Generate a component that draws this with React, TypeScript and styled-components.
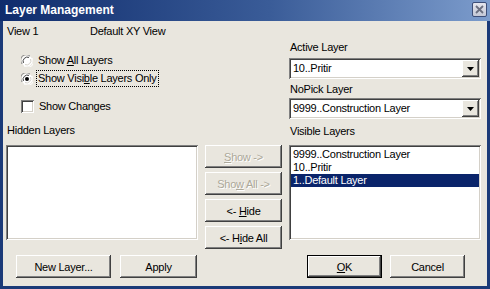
import React, { useState } from 'react';
import styled, { createGlobalStyle, css } from 'styled-components';

const GlobalStyle = createGlobalStyle`
  html, body {
    margin: 0;
    padding: 0;
    background: #ffffff;
  }
  #root {
    width: 490px;
    height: 289px;
  }
  * {
    box-sizing: border-box;
  }
`;

const FACE = '#e9e6de';

const Window = styled.div`
  width: 490px;
  height: 289px;
  display: flex;
  flex-direction: column;
  background: #1b3a78;
  font-family: 'Liberation Sans', Arial, sans-serif;
  font-size: 11px;
  letter-spacing: -0.25px;
  color: #000;
`;

const TitleBar = styled.div`
  height: 21px;
  display: flex;
  align-items: center;
  justify-content: space-between;
  padding: 0 3px 0 5px;
  background: linear-gradient(to right, #0f2c6c 0%, #3a5c98 55%, #7c9ccc 100%);
`;

const Title = styled.span`
  color: #fff;
  font-weight: bold;
  font-size: 12px;
  letter-spacing: 0;
  margin-top: -1px;
`;

const CloseButton = styled.div`
  width: 15px;
  height: 15px;
  margin-top: -2px;
  display: flex;
  align-items: center;
  justify-content: center;
  background: linear-gradient(#e4e6ee, #c4c8d6);
  border: 1px solid #3c4e78;
  border-radius: 2px;
`;

const Body = styled.div`
  flex: 1;
  margin: 0 3px 3px;
  background: ${FACE};
  display: flex;
  flex-direction: column;
  padding-left: 3px;
`;

const Main = styled.div`
  height: 229px;
  display: flex;
  gap: 7px;
`;

const LeftColumn = styled.div`
  width: 276px;
  display: flex;
  flex-direction: column;
`;

const RightColumn = styled.div`
  width: 192px;
  display: flex;
  flex-direction: column;
`;

const ViewRow = styled.div`
  margin-top: 4px;
  height: 13px;
  line-height: 13px;
  display: flex;
  padding-left: 1px;
`;

const ViewName = styled.span`
  width: 83px;
`;

const Label = styled.div<{ $top: number }>`
  margin-top: ${p => p.$top}px;
  height: 13px;
  line-height: 13px;
  padding-left: 1px;
  white-space: nowrap;
`;

const OptionRow = styled.div<{ $top: number; $h: number }>`
  margin-top: ${p => p.$top}px;
  height: ${p => p.$h}px;
  display: flex;
  align-items: center;
  padding-left: 15px;
  gap: 5px;
  white-space: nowrap;
`;

const OptionText = styled.span<{ $focus?: boolean }>`
  line-height: 13px;
  padding: 1px 1px;
  border: 1px dotted transparent;
  margin-left: -2px;
  ${p =>
    p.$focus &&
    css`
      border-color: #000;
    `}
`;

const CheckBox = styled.div`
  width: 13px;
  height: 13px;
  background: #fff;
  box-shadow: inset 1px 1px #808080, inset -1px -1px #fff, inset 2px 2px #404040,
    inset -2px -2px #d4d0c8;
`;

const sunken = css`
  background: #fff;
  box-shadow: inset 1px 1px #808080, inset -1px -1px #fff, inset 2px 2px #404040,
    inset -2px -2px #d4d0c8;
`;

const ListRow = styled.div`
  margin-top: 8px;
  display: flex;
  gap: 7px;
`;

const ListBox = styled.div<{ $top?: number }>`
  ${sunken};
  margin-top: ${p => p.$top ?? 0}px;
  width: 192px;
  height: 95px;
  padding: 3px 2px 2px;
  display: flex;
  flex-direction: column;
`;

const ListItem = styled.div<{ $selected?: boolean }>`
  height: 13px;
  line-height: 13px;
  padding-left: 2px;
  white-space: nowrap;
  ${p =>
    p.$selected &&
    css`
      background: #0a246a;
      color: #fff;
    `}
`;

const ButtonColumn = styled.div`
  width: 77px;
  display: flex;
  flex-direction: column;
  gap: 4px;
`;

const Button = styled.div<{ $w?: number; $disabled?: boolean; $default?: boolean }>`
  width: ${p => (p.$w ? `${p.$w}px` : '100%')};
  height: 23px;
  display: flex;
  align-items: center;
  justify-content: center;
  background: ${FACE};
  white-space: nowrap;
  box-shadow: inset -1px -1px #404040, inset 1px 1px #fff, inset -2px -2px #808080;
  ${p =>
    p.$disabled &&
    css`
      color: #aca899;
      text-shadow: 1px 1px #fff;
    `}
  ${p =>
    p.$default &&
    css`
      box-shadow: inset 0 0 0 1px #000, inset -2px -2px #404040, inset 2px 2px #fff,
        inset -3px -3px #808080;
    `}
`;

const Combo = styled.div<{ $top: number }>`
  ${sunken};
  margin-top: ${p => p.$top}px;
  height: 21px;
  display: flex;
  align-items: center;
  justify-content: space-between;
  padding: 2px 2px 2px 4px;
`;

const ComboText = styled.span`
  line-height: 13px;
`;

const ComboArrow = styled.div`
  width: 17px;
  height: 17px;
  display: flex;
  align-items: center;
  justify-content: center;
  background: ${FACE};
  box-shadow: inset -1px -1px #404040, inset 1px 1px #fff, inset -2px -2px #808080;
`;

const Footer = styled.div`
  margin-top: 5px;
  display: flex;
  padding: 0 22px 0 10px;
  gap: 9px;
`;

const Spacer = styled.div`
  flex: 1;
`;

const FooterGroup = styled.div`
  display: flex;
  gap: 8px;
`;

const Radio = ({ checked }: { checked?: boolean }) => (
  <svg width="12" height="12" viewBox="0 0 12 12">
    <circle cx="6" cy="6" r="5.5" fill="#fff" />
    <path d="M1.2 9 A5.5 5.5 0 0 1 9 1.2" stroke="#808080" strokeWidth="1" fill="none" />
    <path d="M2.4 8 A4.3 4.3 0 0 1 8 2.4" stroke="#404040" strokeWidth="1" fill="none" />
    <path d="M10.8 3 A5.5 5.5 0 0 1 3 10.8" stroke="#fff" strokeWidth="1" fill="none" />
    <path d="M9.6 4 A4.3 4.3 0 0 1 4 9.6" stroke="#d4d0c8" strokeWidth="1" fill="none" />
    {checked && <circle cx="6" cy="6" r="2" fill="#000" />}
  </svg>
);

const Arrow = () => (
  <svg width="7" height="4" viewBox="0 0 7 4">
    <path d="M0 0 H7 L3.5 4 Z" fill="#000" />
  </svg>
);

export default function App() {
  const [showVisibleOnly] = useState(true);
  const visible = ['9999..Construction Layer', '10..Pritir', '1..Default Layer'];

  return (
    <>
      <GlobalStyle />
      <Window>
        <TitleBar>
          <Title>Layer Management</Title>
          <CloseButton>
            <svg width="9" height="9" viewBox="0 0 9 9">
              <path d="M1 1 L8 8 M8 1 L1 8" stroke="#6a6f80" strokeWidth="1.8" />
            </svg>
          </CloseButton>
        </TitleBar>
        <Body>
          <Main>
            <LeftColumn>
              <ViewRow>
                <ViewName>View 1</ViewName>
                <span>Default XY View</span>
              </ViewRow>
              <OptionRow $top={16} $h={13}>
                <Radio checked={!showVisibleOnly} />
                <OptionText>
                  Show <u>A</u>ll Layers
                </OptionText>
              </OptionRow>
              <OptionRow $top={3} $h={17}>
                <Radio checked={showVisibleOnly} />
                <OptionText $focus>
                  Show Visi<u>b</u>le Layers Only
                </OptionText>
              </OptionRow>
              <OptionRow $top={12} $h={14}>
                <CheckBox />
                <OptionText>Show Changes</OptionText>
              </OptionRow>
              <Label $top={11}>Hidden Layers</Label>
              <ListRow>
                <ListBox />
                <ButtonColumn>
                  <Button $disabled>
                    <span>
                      <u>S</u>how -&gt;
                    </span>
                  </Button>
                  <Button $disabled>
                    <span>
                      Sho<u>w</u> All -&gt;
                    </span>
                  </Button>
                  <Button>
                    <span>
                      &lt;- <u>H</u>ide
                    </span>
                  </Button>
                  <Button>
                    <span>
                      &lt;- H<u>i</u>de All
                    </span>
                  </Button>
                </ButtonColumn>
              </ListRow>
            </LeftColumn>
            <RightColumn>
              <Label $top={20}>Active Layer</Label>
              <Combo $top={4}>
                <ComboText>10..Pritir</ComboText>
                <ComboArrow>
                  <Arrow />
                </ComboArrow>
              </Combo>
              <Label $top={4}>NoPick Layer</Label>
              <Combo $top={2}>
                <ComboText>9999..Construction Layer</ComboText>
                <ComboArrow>
                  <Arrow />
                </ComboArrow>
              </Combo>
              <Label $top={6}>Visible Layers</Label>
              <ListBox $top={7}>
                {visible.map((name, i) => (
                  <ListItem key={name} $selected={i === visible.length - 1}>
                    {name}
                  </ListItem>
                ))}
              </ListBox>
            </RightColumn>
          </Main>
          <Footer>
            <Button $w={95}>New Layer...</Button>
            <Button $w={77}>Apply</Button>
            <Spacer />
            <FooterGroup>
              <Button $w={75} $default>
                <span>
                  <u>O</u>K
                </span>
              </Button>
              <Button $w={75}>Cancel</Button>
            </FooterGroup>
          </Footer>
        </Body>
      </Window>
    </>
  );
}
